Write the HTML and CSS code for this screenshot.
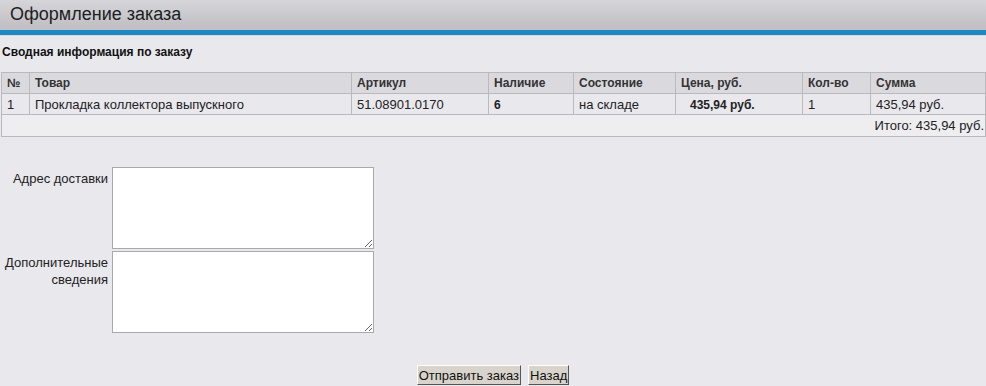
FILE: index.html
```html
<!DOCTYPE html>
<html lang="ru">
<head>
    <meta charset="UTF-8">
    <title>Оформление заказа</title>
    <link rel="stylesheet" href="styles.css">
</head>
<body>

    <!-- Page header -->
    <div class="page-header">
        <h1>Оформление заказа</h1>
    </div>

    <!-- Order summary -->
    <div class="summary">
        <h2>Сводная информация по заказу</h2>
        <table class="order-table">
            <tr>
                <th class="col-num">№</th>
                <th class="col-name">Товар</th>
                <th class="col-art">Артикул</th>
                <th class="col-stock">Наличие</th>
                <th class="col-state">Состояние</th>
                <th class="col-price">Цена, руб.</th>
                <th class="col-qty">Кол-во</th>
                <th class="col-sum">Сумма</th>
            </tr>
            <tr>
                <td>1</td>
                <td>Прокладка коллектора выпускного</td>
                <td>51.08901.0170</td>
                <td><b>6</b></td>
                <td>на складе</td>
                <td class="price"><b>435,94 руб.</b></td>
                <td>1</td>
                <td>435,94 руб.</td>
            </tr>
            <tr class="total-row">
                <td colspan="8">Итого: 435,94 руб.</td>
            </tr>
        </table>
    </div>

    <!-- Delivery form -->
    <form class="order-form">
        <div class="form-row">
            <label for="address">Адрес доставки</label>
            <textarea id="address"></textarea>
        </div>
        <div class="form-row">
            <label for="extra">Дополнительные сведения</label>
            <textarea id="extra"></textarea>
        </div>
        <div class="buttons">
            <button type="submit">Отправить заказ</button>
            <button type="button">Назад</button>
        </div>
    </form>

</body>
</html>
```

FILE: styles.css
```css
* {
    margin: 0;
    padding: 0;
    box-sizing: border-box;
}

body {
    background: #e9e8ed;
    font-family: "Liberation Sans", Arial, sans-serif;
    font-size: 13px;
    color: #222;
}

.page-header {
    height: 35px;
    background: linear-gradient(#d6d5da, #c1c0c5 86%);
    border-bottom: 5px solid #1e88c0;
    box-shadow: 0 1px 0 #d8d8de;
}

.page-header h1 {
    font-size: 18px;
    font-weight: normal;
    color: #1d1d1d;
    padding: 3px 0 0 10px;
    line-height: 22px;
}

.summary h2 {
    font-size: 12px;
    font-weight: bold;
    color: #111;
    padding: 10px 0 0 2px;
    line-height: 15px;
}

.order-table {
    margin: 12px 0 0 1px;
    width: 984px;
    border-collapse: collapse;
    table-layout: fixed;
}

.order-table th,
.order-table td {
    border: 1px solid #b9b9be;
    padding: 0 5px;
    height: 21px;
    text-align: left;
    color: #222;
}

.order-table th {
    background: #dad9de;
    font-size: 12px;
    font-weight: bold;
    color: #333;
}

.order-table td {
    background: #e9e8ed;
}

.order-table td b {
    font-size: 12px;
}

.order-table .price {
    padding-left: 14px;
}

.order-table .total-row td {
    background: #eeeef1;
    text-align: right;
    padding-right: 1px;
    height: 22px;
}

.col-num { width: 28px; }
.col-name { width: 322px; }
.col-art { width: 137px; }
.col-stock { width: 85px; }
.col-state { width: 102px; }
.col-price { width: 127px; }
.col-qty { width: 68px; }
.col-sum { width: 115px; }

.order-form {
    padding-top: 30px;
}

.form-row {
    display: flex;
    align-items: flex-start;
    margin-bottom: 2px;
}

.form-row label {
    width: 112px;
    text-align: right;
    padding: 3px 4px 0 0;
    line-height: 17px;
    color: #222;
}

.form-row textarea {
    width: 262px;
    height: 82px;
    border: 1px solid #a9a9ad;
    background: #fff;
    resize: both;
}

.buttons {
    display: flex;
    justify-content: center;
    gap: 7px;
    padding-top: 30px;
}

.buttons button {
    font-family: "Liberation Sans", Arial, sans-serif;
    font-size: 13px;
    color: #111;
    background: #d8d4cc;
    border: 1px solid;
    border-color: #fff #555 #555 #fff;
    padding: 1px 1px;
    height: 20px;
}
```
